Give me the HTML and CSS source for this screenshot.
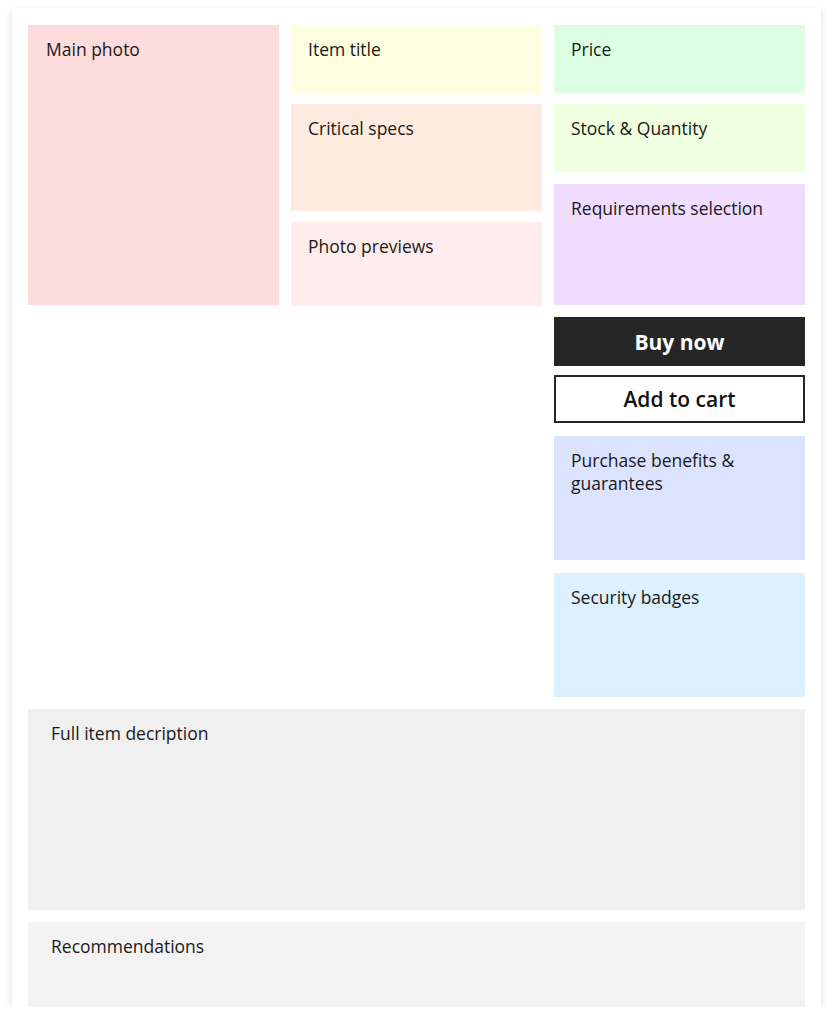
FILE: index.html
```html
<!DOCTYPE html>
<html>
<head>
<meta charset="utf-8">
<link rel="stylesheet" href="styles.css">
</head>
<body>
<div class="card">
  <div class="top">
    <div class="box main-photo">Main photo</div>
    <div class="col">
      <div class="box title">Item title</div>
      <div class="box specs">Critical specs</div>
      <div class="box previews">Photo previews</div>
    </div>
    <div class="col col3">
      <div class="box price">Price</div>
      <div class="box stock">Stock &amp; Quantity</div>
      <div class="box req">Requirements selection</div>
      <div class="buttons">
        <button class="btn buy">Buy now</button>
        <button class="btn cart">Add to cart</button>
      </div>
      <div class="box benefits">Purchase benefits &amp;<br>guarantees</div>
      <div class="box security">Security badges</div>
    </div>
  </div>
  <div class="box wide desc">Full item decription</div>
  <div class="box wide recs">Recommendations</div>
</div>
</body>
</html>
```
FILE: styles.css
```css
html, body {
  margin: 0;
  padding: 0;
  background: #ffffff;
}
body {
  font-family: "Open Sans", Lato, sans-serif;
  color: #1a1a1a;
}
.card {
  box-sizing: border-box;
  margin: 8px 0 0 12px;
  width: 809px;
  height: 999px;
  overflow: hidden;
  background: #fff;
  padding: 17px 16px 0 16px;
  box-shadow: 0 2px 7px rgba(0,0,0,0.13);
  display: flex;
  flex-direction: column;
  gap: 12px;
}
.card > * { flex-shrink: 0; }
.top {
  display: grid;
  grid-template-columns: 251px 251px 251px;
  column-gap: 12px;
  align-items: start;
}
.col {
  display: flex;
  flex-direction: column;
  gap: 11px;
}
.box {
  box-sizing: border-box;
  padding: 13px 17px;
  font-size: 17.5px;
  line-height: 23px;
}
.main-photo { height: 280px; background: #ffdcdc; padding-left: 18px; }
.title { height: 68px; background: #fefee0; }
.specs { height: 107px; background: #ffeadf; }
.previews { height: 84px; background: #ffecec; }
.price { height: 68px; background: #dcffe3; }
.stock { height: 68px; background: #f0ffe0; }
.req { height: 121px; background: #efdcff; margin-top: 1px; }
.buttons {
  display: flex;
  flex-direction: column;
  gap: 9px;
  margin-top: 1px;
}
.btn {
  box-sizing: border-box;
  height: 49px;
  width: 100%;
  font-family: "Open Sans", Lato, sans-serif;
  font-weight: 700;
  font-size: 21px;
  border: 2px solid #262626;
  margin: 0;
  padding: 0;
}
.buy { background: #262626; color: #fff; }
.cart { background: #fff; color: #111; height: 48px; font-weight: 600; }
.benefits { height: 124px; background: #dce3ff; margin-top: 2px; }
.security { height: 124px; background: #dcf0ff; margin-top: 2px; }
.wide { padding: 13px 23px; }
.desc { height: 201px; background: #f0f0f0; }
.recs { height: 100px; background: #f3f3f3; }
```
